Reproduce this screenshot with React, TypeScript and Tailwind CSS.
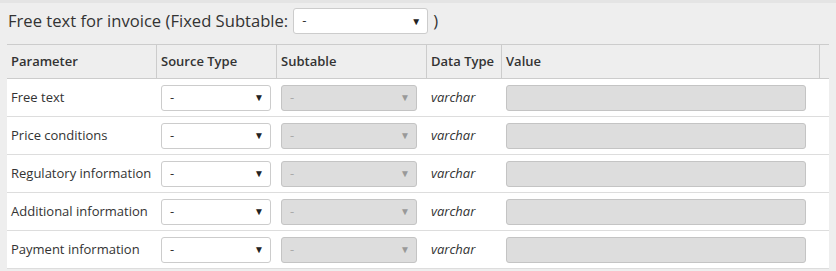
import { FC } from 'react';

const rows = [
  'Free text',
  'Price conditions',
  'Regulatory information',
  'Additional information',
  'Payment information',
];

interface SelectProps {
  width: string;
  disabled?: boolean;
}

const FakeSelect: FC<SelectProps> = ({ width, disabled }) => (
  <div
    className={`${width} h-[26px] flex items-center justify-between pl-[8px] pr-[6px] rounded-[3px] border ${
      disabled ? 'bg-[#dddddd] border-[#c4c4c4] text-[#aaaaaa]' : 'bg-white border-[#cccccc] text-[#333333]'
    }`}
  >
    <span className="text-[13px]">-</span>
    <span className={`text-[10px] ${disabled ? 'text-[#999999]' : 'text-[#222222]'}`}>▼</span>
  </div>
);

export default function App() {
  return (
    <div className="w-[836px] h-[271px] bg-[#eeeeee] border-t-[3px] border-[#e4e4e4] font-['Open_Sans',sans-serif] text-[#333333]">
      <div className="flex items-center h-[35px] pl-[8px] pt-[1px]">
        <span className="text-[16.6px]">Free text for invoice (Fixed Subtable:</span>
        <div className="ml-[5px]">
          <FakeSelect width="w-[135px]" />
        </div>
        <span className="text-[16.6px] ml-[5px]">)</span>
      </div>
      <div className="ml-[7px] w-[822px] mt-[6px]">
        <div className="flex h-[35px] items-center text-[13px] font-semibold border-t border-b border-[#cccccc]">
          <div className="w-[150px] h-full flex items-center pl-[4px] border-r border-[#cccccc]">Parameter</div>
          <div className="w-[120px] h-full flex items-center pl-[4px] border-r border-[#cccccc]">Source Type</div>
          <div className="w-[150px] h-full flex items-center pl-[4px] border-r border-[#cccccc]">Subtable</div>
          <div className="w-[75px] h-full flex items-center pl-[4px] border-r border-[#cccccc]">Data Type</div>
          <div className="w-[318px] h-full flex items-center pl-[4px] border-r border-[#cccccc]">Value</div>
          <div className="flex-1" />
        </div>
        {rows.map((name) => (
          <div key={name} className="flex h-[38px] items-center bg-white border-b border-[#dddddd] text-[13px]">
            <div className="w-[150px] pl-[4px]">{name}</div>
            <div className="w-[120px] pl-[4px]">
              <FakeSelect width="w-[110px]" />
            </div>
            <div className="w-[150px] pl-[4px]">
              <FakeSelect width="w-[136px]" disabled />
            </div>
            <div className="w-[75px] pl-[4px] italic">varchar</div>
            <div className="w-[318px] pl-[4px]">
              <div className="w-[300px] h-[26px] rounded-[3px] bg-[#dddddd] border border-[#c4c4c4]" />
            </div>
          </div>
        ))}
      </div>
    </div>
  );
}
